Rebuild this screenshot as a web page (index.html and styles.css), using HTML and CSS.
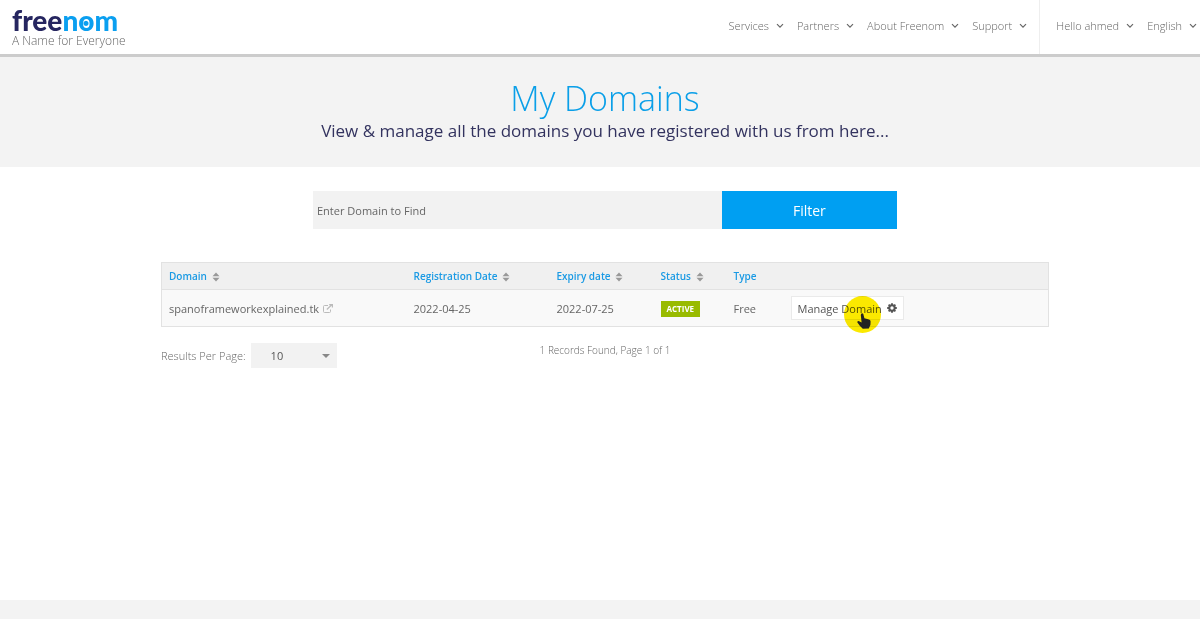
FILE: index.html
```html
<!DOCTYPE html>
<html lang="en">
<head>
    <meta charset="UTF-8">
    <meta name="viewport" content="width=device-width, initial-scale=1.0">
    <link rel="stylesheet" href="styles.css">
    <title>My Domains - Freenom</title>
</head>
<body>
    <!-- shared icons -->
    <svg class="sprite" aria-hidden="true">
        <symbol id="chevron" viewBox="0 0 8 6">
            <path d="M1 1.2 L4 4.2 L7 1.2" fill="none" stroke="currentColor" stroke-width="1.2"/>
        </symbol>
        <symbol id="sort" viewBox="0 0 8 10">
            <path d="M4 0.5 L7.5 4.2 H0.5 Z M4 9.5 L7.5 5.8 H0.5 Z" fill="currentColor"/>
        </symbol>
    </svg>

    <header class="header">
        <a class="logo" href="#">
            <span class="logo-name"><span class="logo-free">free</span>n<span class="logo-o">o</span>m</span>
            <span class="logo-tagline">A Name for Everyone</span>
        </a>
        <nav class="nav">
            <a href="#">Services <svg class="chevron"><use href="#chevron"/></svg></a>
            <a href="#">Partners <svg class="chevron"><use href="#chevron"/></svg></a>
            <a href="#">About Freenom <svg class="chevron"><use href="#chevron"/></svg></a>
            <a href="#">Support <svg class="chevron"><use href="#chevron"/></svg></a>
        </nav>
        <nav class="nav nav-account">
            <a href="#">Hello ahmed <svg class="chevron"><use href="#chevron"/></svg></a>
            <a href="#">English <svg class="chevron"><use href="#chevron"/></svg></a>
        </nav>
    </header>

    <section class="banner">
        <h1>My Domains</h1>
        <p>View &amp; manage all the domains you have registered with us from here...</p>
    </section>

    <main class="content">
        <form class="search">
            <input type="text" placeholder="Enter Domain to Find" aria-label="Enter Domain to Find">
            <button type="button">Filter</button>
        </form>

        <table class="domains">
            <thead>
                <tr>
                    <th class="col-domain"><a href="#">Domain <svg class="sort"><use href="#sort"/></svg></a></th>
                    <th class="col-registered"><a href="#">Registration Date <svg class="sort"><use href="#sort"/></svg></a></th>
                    <th class="col-expiry"><a href="#">Expiry date <svg class="sort"><use href="#sort"/></svg></a></th>
                    <th class="col-status"><a href="#">Status <svg class="sort"><use href="#sort"/></svg></a></th>
                    <th class="col-type">Type</th>
                    <th></th>
                </tr>
            </thead>
            <tbody>
                <tr>
                    <td>
                        <a href="#">spanoframeworkexplained.tk<svg class="external" viewBox="0 0 10 9">
                            <path d="M5 1.5 H1.5 Q0.5 1.5 0.5 2.5 V7.5 Q0.5 8.5 1.5 8.5 H6.5 Q7.5 8.5 7.5 7.5 V5.5" fill="none" stroke="currentColor"/>
                            <path d="M3.8 5.5 L8.5 1 M6.2 0.6 H9.4 V3.6" fill="none" stroke="currentColor" stroke-width="1.2"/>
                        </svg></a>
                    </td>
                    <td>2022-04-25</td>
                    <td>2022-07-25</td>
                    <td><span class="label">ACTIVE</span></td>
                    <td>Free</td>
                    <td>
                        <div class="manage">
                            <button type="button">Manage Domain
                                <svg class="gear" viewBox="0 0 10 10">
                                    <circle cx="5" cy="5" r="2.7" fill="none" stroke="currentColor" stroke-width="2"/>
                                    <path d="M5 0.2 V2 M5 8 V9.8 M0.2 5 H2 M8 5 H9.8 M1.6 1.6 L2.9 2.9 M7.1 7.1 L8.4 8.4 M1.6 8.4 L2.9 7.1 M7.1 2.9 L8.4 1.6" stroke="currentColor" stroke-width="1.9"/>
                                </svg>
                            </button>
                            <span class="halo"></span>
                            <svg class="hand" viewBox="0 0 14 16">
                                <path d="M4.2 0.8 Q5.3 -0.2 6.3 1 L7.4 5.2 L12 6.4 Q13.6 7 13.6 8.6 L13.4 12 L11.8 15.5 L5.8 15.8 L3 13 L0.4 9.6 Q0 8 1.6 7.9 L4.6 9.4 L3.8 2 Z" fill="#222"/>
                            </svg>
                        </div>
                    </td>
                </tr>
            </tbody>
        </table>

        <div class="pager">
            <div class="per-page">
                <label for="itemlimit">Results Per Page:</label>
                <div class="select">
                    <select id="itemlimit">
                        <option selected>10</option>
                        <option>25</option>
                        <option>50</option>
                        <option>100</option>
                    </select>
                    <svg class="caret" viewBox="0 0 8 4"><path d="M0 0 H8 L4 4 Z" fill="currentColor"/></svg>
                </div>
            </div>
            <p class="records">1 Records Found, Page 1 of 1</p>
        </div>
    </main>

    <footer class="footer"></footer>
</body>
</html>
```

FILE: styles.css
```css
* {
    box-sizing: border-box;
}

body {
    display: flex;
    flex-direction: column;
    min-height: 100vh;
    margin: 0;
    font-family: "Open Sans", sans-serif;
    font-size: 11px;
    color: #666;
    background-color: #fff;
}

a {
    color: inherit;
    text-decoration: none;
}

button, input, select {
    font-family: inherit;
    border: none;
    border-radius: 0;
}

button {
    cursor: pointer;
}

.sprite {
    position: absolute;
    width: 0;
    height: 0;
}

/* header */
.header {
    display: flex;
    height: 57px;
    padding-left: 12px;
    border-bottom: 3px solid #ccc;
}

.logo {
    display: flex;
    flex-direction: column;
    margin-right: auto;
    padding-top: 6px;
}

.logo-name {
    font-family: Lato, sans-serif;
    font-size: 28px;
    font-weight: 900;
    line-height: 28px;
    color: #0a9ff0;
}

.logo-free {
    color: #262660;
}

.logo-o {
    background: radial-gradient(circle at 50% 60%, #0a9ff0 2px, transparent 3px);
}

.logo-tagline {
    font-size: 12px;
    font-weight: 300;
    line-height: 14px;
}

.nav {
    display: flex;
    align-items: center;
    gap: 13px;
    padding-right: 12px;
    padding-bottom: 3px;
    font-size: 11px;
    font-weight: 300;
    white-space: nowrap;
}

.nav a {
    display: flex;
    align-items: center;
    gap: 7px;
}

.nav-account {
    padding-left: 16px;
    padding-right: 3px;
    border-left: 1px solid #eee;
}

.chevron {
    width: 8px;
    height: 6px;
}

/* banner */
.banner {
    padding: 20px 0 24px 10px;
    text-align: center;
    background-color: #f3f3f3;
}

.banner h1 {
    margin: 0;
    font-size: 34px;
    font-weight: 300;
    line-height: 42px;
    color: #0a9fe8;
}

.banner p {
    margin: 0;
    font-size: 17px;
    line-height: 24px;
    color: #33335f;
}

/* content */
.content {
    flex: 1;
    width: 100%;
    max-width: 898px;
    margin: 0 auto;
    padding: 24px 0 24px 10px;
}

.search {
    display: flex;
    max-width: 584px;
    height: 38px;
    margin: 0 auto 33px;
}

.search input {
    flex: 1;
    min-width: 0;
    padding: 0 4px;
    font-size: 11px;
    background-color: #f2f2f2;
}

.search input::placeholder {
    color: #666;
}

.search button {
    flex: 0 0 30%;
    font-size: 14px;
    color: #fff;
    background-color: #009ff2;
}

.domains {
    width: 100%;
    table-layout: fixed;
    border-collapse: collapse;
    border: 1px solid #e2e2e2;
}

.domains th {
    height: 27px;
    padding: 0 7px;
    font-size: 10px;
    font-weight: 600;
    text-align: left;
    color: #1a9ae4;
    background-color: #f0f0f0;
    border-bottom: 1px solid #e2e2e2;
}

.domains td {
    height: 37px;
    padding: 0 7px;
    background-color: #f9f9f9;
}

.col-domain {
    width: 245px;
}

.col-registered {
    width: 143px;
}

.col-expiry {
    width: 104px;
}

.col-status {
    width: 73px;
}

.col-type {
    width: 57px;
}

.sort {
    width: 8px;
    height: 10px;
    margin-left: 2px;
    vertical-align: -2px;
    color: #999;
}

.external {
    width: 10px;
    height: 9px;
    margin-left: 4px;
    color: #bbb;
}

.label {
    display: inline-block;
    padding: 0 6px;
    font-size: 8px;
    font-weight: 700;
    line-height: 16px;
    color: #fff;
    background-color: #9b0;
}

.manage {
    position: relative;
    display: inline-block;
}

.manage button {
    display: flex;
    align-items: center;
    gap: 5px;
    height: 24px;
    padding: 0 6px;
    font-size: 11px;
    color: #555;
    background-color: #fff;
    border: 1px solid #eaeaea;
}

.gear {
    width: 10px;
    height: 10px;
}

/* pointer highlight */
.halo {
    position: absolute;
    top: 0;
    left: 53px;
    width: 37px;
    height: 37px;
    background-color: #fbe900;
    border-radius: 50%;
    mix-blend-mode: multiply;
    pointer-events: none;
}

.hand {
    position: absolute;
    top: 17px;
    left: 66px;
    width: 14px;
    height: 16px;
    pointer-events: none;
}

.pager {
    display: grid;
    grid-template-columns: 1fr auto 1fr;
    margin-top: 16px;
    font-weight: 300;
}

.per-page {
    display: flex;
    align-items: center;
    gap: 5px;
}

.select {
    position: relative;
}

.select select {
    appearance: none;
    width: 86px;
    height: 25px;
    padding: 0 20px;
    font-size: 11px;
    color: #555;
    background-color: #f2f2f2;
}

.caret {
    position: absolute;
    top: 11px;
    right: 7px;
    width: 8px;
    height: 4px;
    color: #888;
    pointer-events: none;
}

.records {
    margin: 0;
    font-size: 10px;
    line-height: 14px;
}

.footer {
    min-height: 19px;
    background-color: #f3f3f3;
}
```
